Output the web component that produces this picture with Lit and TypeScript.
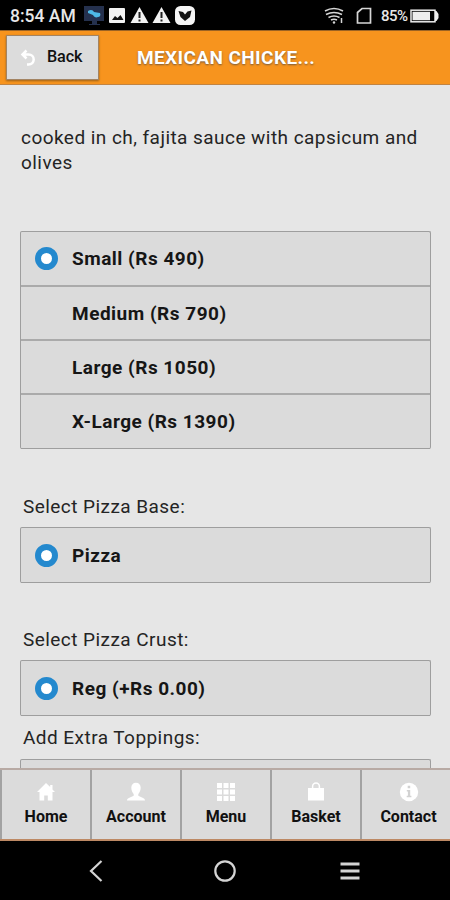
import { LitElement, html, svg, css } from "lit";
import { customElement, property, state } from "lit/decorators.js";

const tabIcons: Record<string, unknown> = {
  Home: svg`<path d="M10 1 1 10h2.500v8.500h4.700v-5h3.600v5h4.700V10H19l-2.500-2.600V3h-2.300v2z"/>`,
  Account: svg`<path d="M10 .8c-3 0-4.700 2.100-4.700 5 0 2.500 1.100 4.800 2.400 6.200v1.800C5.300 15.300 1 15.800 1 18.400h18c0-2.600-4.300-3.100-6.700-4.600V12c1.300-1.400 2.400-3.700 2.400-6.200 0-2.900-1.700-5-4.700-5z"/>`,
  Menu: svg`<path d="M1 1h5v5H1zM7.500 1h5v5h-5zM14 1h5v5h-5zM1 7.500h5v5H1zM7.500 7.500h5v5h-5zM14 7.500h5v5h-5zM1 14h5v5H1zM7.500 14h5v5h-5zM14 14h5v5h-5z"/>`,
  Basket: svg`<path d="M2 6h16v12.500H2z"/><path d="M6.600 7V4.400a3.400 3.400 0 0 1 6.800 0V7" fill="none" stroke="#fff" stroke-width="1.500"/>`,
  Contact: svg`<circle cx="10" cy="10" r="9.200"/><path d="M8.700 3.700h2.500v2.500H8.700zM7.800 8h3.400v5.700h1.200v1.500H7.700v-1.500h1.200V9.500H7.800z" fill="#d2d2d2"/>`,
};

@customElement("option-list")
class OptionList extends LitElement {
  @property({ attribute: false }) options: string[] = [];
  @state() private selected = 0;

  static styles = css`
    :host { display: block; box-sizing: border-box; border: 1px solid #9e9e9e; border-bottom: 0; border-radius: 2px; background: #dbdbdb; }
    .row { display: flex; align-items: center; box-sizing: border-box; height: 54px; padding-left: 14px; border-bottom: 2px solid #aaa; font-weight: 700; font-size: 19px; letter-spacing: 0.5px; color: #161616; cursor: pointer; }
    .row:first-child { height: 55px; }
    .row:last-child { border-bottom: 1px solid #9e9e9e; }
    .mark { flex: none; box-sizing: border-box; width: 23px; height: 23px; margin-right: 14px; border-radius: 50%; }
    .on { border: 6px solid #2489ce; background: #fff; }
  `;

  render() {
    return this.options.map((label, i) => html`
      <div class="row" @click=${() => (this.selected = i)}>
        <span class="mark ${i === this.selected ? "on" : ""}"></span><span>${label}</span>
      </div>`);
  }
}

@customElement("app-root")
class AppRoot extends LitElement {
  static styles = css`
    :host { display: flex; flex-direction: column; height: 900px; overflow: hidden; background: #e6e6e6; font-family: Roboto, sans-serif; color: #242424; }
    svg { display: block; flex: none; }
    .status { flex: none; height: 30px; box-sizing: border-box; background: #000; color: #e8e8e8; display: flex; align-items: center; padding: 1px 11px 0 10px; white-space: nowrap; }
    .time { width: 74px; font-size: 17.5px; font-weight: 500; }
    .battery { margin-left: auto; display: flex; align-items: center; font-size: 15px; font-weight: 500; letter-spacing: -0.5px; }
    .pct { width: 29px; margin-left: 9px; }
    .header { flex: none; height: 55px; box-sizing: border-box; background: #f7941e; border-top: 1px solid #9b6324; border-bottom: 1px solid #c18443; display: flex; align-items: center; padding-left: 6px; }
    .back { box-sizing: border-box; width: 93px; height: 45px; border: 1px solid #a38463; background: #dcdcdc; box-shadow: 0 1px 2px #99601a; display: flex; align-items: center; padding-left: 13px; font-weight: 500; font-size: 16.2px; letter-spacing: -0.1px; color: #111; }
    .back span { margin-left: 10px; padding-bottom: 3px; }
    .title { margin-left: 38px; font-size: 19px; letter-spacing: 0.4px; font-weight: 700; color: #fff; text-shadow: 0 1px 2px #75583a; }
    .content { flex: 1; min-height: 0; overflow: hidden; padding: 40px 19px 0 20px; font-size: 19px; letter-spacing: 0.45px; }
    .description { line-height: 25px; padding-left: 1px; margin-bottom: 56px; }
    .label { line-height: 24px; padding-left: 3px; margin: 45px 0 8px; }
    .label.first { margin-top: 46px; }
    .label.tight { margin: 10px 0 9px; }
    .tabs { flex: none; box-sizing: border-box; height: 73px; background: #dbdbdb; border-top: 2px solid #b8aaa4; border-bottom: 2px solid #bd8964; display: grid; grid-template-columns: 90px 90px 90px 90px 1fr; }
    .tab { box-sizing: border-box; border-left: 2px solid #a2a2a2; display: flex; flex-direction: column; align-items: center; padding-top: 12px; font-size: 16px; font-weight: 700; line-height: 20px; color: #111; }
    .tab span { margin-top: 5px; }
    .tab:last-child { padding-left: 5px; }
    .system { flex: none; height: 59px; background: #000; display: grid; grid-template-columns: repeat(3, 125px); justify-content: center; align-items: center; justify-items: center; }
  `;

  render() {
    return html`
      <div class="status">
        <span class="time">8:54 AM</span>
        <svg width="112" height="22" viewBox="84 5 112 22">
          <path d="M84 6h20v15h-7v3h3v1H89v-1h3v-3h-8z" fill="#25314e"/>
          <path d="M88 11c3-2 5-1 6 1l6 1c1 2 0 4-2 4-2 1-4 0-5-2l-5-2z" fill="#4eb8e5"/>
          <rect x="109" y="8" width="16" height="15" rx="1" fill="#f2f2f2"/><path d="m112 20 3-4 2.500 2 3-3 3 5z" fill="#111"/>
          <path d="m139.500 7 9 16h-18zm22 0 9 16h-18z" fill="#f2f2f2"/>
          <path d="M139.500 12v6m0 1.500v2m22-9.500v6m0 1.500v2" stroke="#222" stroke-width="2"/>
          <rect x="175" y="6" width="20" height="19" rx="5.500" fill="#f5f5f5"/><path d="m178.500 11 4.500 1 2 2.500 2.500-3 4-1-1.500 6.500-5 4-4.500-4z" fill="#111"/>
        </svg>
        <div class="battery">
          <svg width="48" height="20" viewBox="323 6 48 20" fill="none" stroke="#d6d6d6">
            <path d="M324 11q9-5 18 0M325 14.500q8-4 16 0M327.500 17.500q5.500-3 11 0M330 20q3-1.500 6 0" stroke-width="1.600"/>
            <circle cx="333" cy="22.500" r="1.200" fill="#d6d6d6" stroke="none"/><path d="M340.500 18v5" stroke-width="1.500"/>
            <path d="M356.500 12.500 361 8.500h8.500V23h-13z" stroke-width="1.700"/>
          </svg>
          <span class="pct">85%</span>
          <svg width="29" height="14" viewBox="0 0 29 14"><rect x="1" y="1.200" width="24" height="11.600" fill="none" stroke="#ededed" stroke-width="1.500"/><path d="M2.500 2.800h17.500v8.400H2.500zM25 2h1.500l2 3v4l-2 3H25z" fill="#ededed"/></svg>
        </div>
      </div>
      <div class="header">
        <div class="back">
          <svg width="17" height="18" viewBox="0 0 17 18"><path d="M6.500 1.500 2.500 5.500l4 4M2.500 5.500h6.200a4.900 4.900 0 0 1 0 10H7" fill="none" stroke="#fff" stroke-width="2.500"/></svg>
          <span>Back</span>
        </div>
        <div class="title">MEXICAN CHICKE...</div>
      </div>
      <div class="content">
        <div class="description">cooked in ch, fajita sauce with capsicum and olives</div>
        <option-list .options=${["Small (Rs 490)", "Medium (Rs 790)", "Large (Rs 1050)", "X-Large (Rs 1390)"]}></option-list>
        <div class="label first">Select Pizza Base:</div>
        <option-list .options=${["Pizza"]}></option-list>
        <div class="label">Select Pizza Crust:</div>
        <option-list .options=${["Reg (+Rs 0.00)"]}></option-list>
        <div class="label tight">Add Extra Toppings:</div>
        <option-list .options=${[""]}></option-list>
      </div>
      <div class="tabs">
        ${Object.entries(tabIcons).map(([name, icon]) => html`<div class="tab"><svg width="20" height="20" viewBox="0 0 20 20" fill="#fff">${icon}</svg><span>${name}</span></div>`)}
      </div>
      <div class="system">
        <svg width="24" height="24" viewBox="0 0 24 24"><path d="M13.500 2 3 12l10.500 10" fill="none" stroke="#d4d4d4" stroke-width="2.200"/></svg>
        <svg width="24" height="24" viewBox="0 0 24 24"><circle cx="12" cy="12" r="9.700" fill="none" stroke="#d4d4d4" stroke-width="2.200"/></svg>
        <svg width="24" height="24" viewBox="0 0 24 24"><path d="M2.500 5h19M2.500 12h19M2.500 19h19" stroke="#d4d4d4" stroke-width="3"/></svg>
      </div>`;
  }
}
